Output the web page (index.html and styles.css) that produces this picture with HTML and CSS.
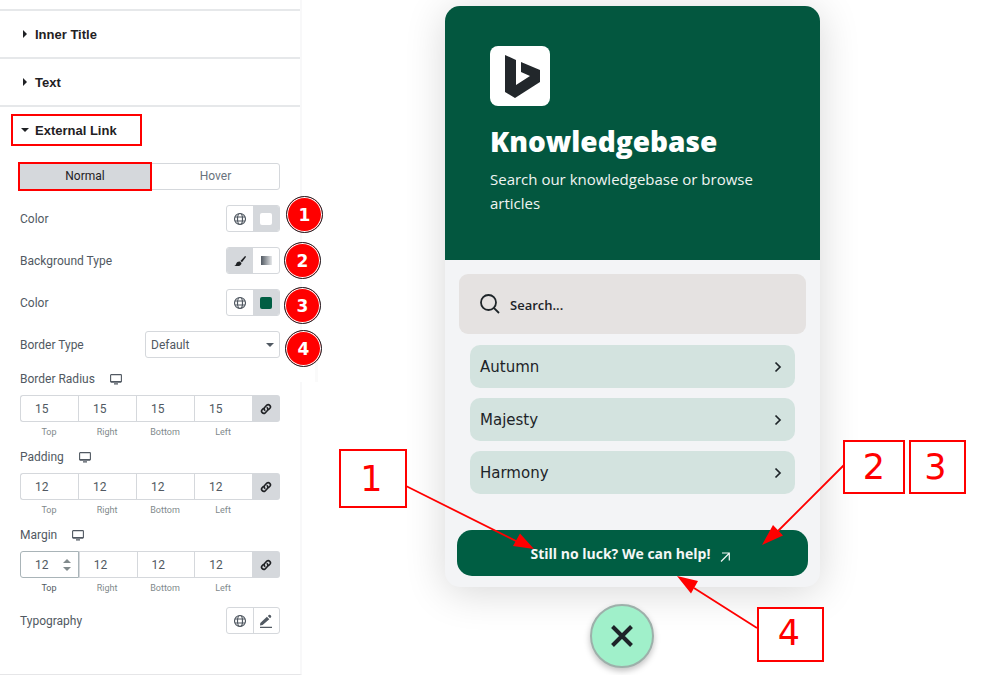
FILE: index.html
```html
<!DOCTYPE html>
<html lang="en">
<head>
<meta charset="utf-8">
<title>External Link style settings</title>
<link rel="stylesheet" href="styles.css">
</head>
<body>
<svg class="defs" aria-hidden="true">
  <symbol id="globe" viewBox="0 0 14 14"><g fill="none" stroke="currentColor" stroke-width="1.2"><circle cx="7" cy="7" r="5.5"/><ellipse cx="7" cy="7" rx="2.5" ry="5.5"/><path d="M2 5h10M2 9h10"/></g></symbol>
  <symbol id="screen" viewBox="0 0 12 11"><rect x=".6" y=".6" width="10.8" height="7.4" rx=".6" fill="none" stroke="currentColor" stroke-width="1.1"/><path d="M1 7h10v1.4H1zM4 9.2h4v1.2H4z" fill="currentColor"/></symbol>
  <symbol id="chain" viewBox="0 0 14 14"><g fill="none" stroke="currentColor" stroke-width="1.6" stroke-linecap="round"><path d="M5.8 8.3a2.2 2.2 0 0 1 0-3.1l2-2a2.2 2.2 0 0 1 3.1 3.1L9.7 7.5"/><path d="M8.2 5.7a2.2 2.2 0 0 1 0 3.1l-2 2a2.2 2.2 0 0 1-3.1-3.1l1.2-1.2"/></g></symbol>
  <symbol id="chevron" viewBox="0 0 8 12"><path d="M1.5 1.5 6 6l-4.5 4.500" fill="none" stroke="currentColor" stroke-width="1.7"/></symbol>
</svg>
<div class="page">
  <aside class="sidebar">
    <div class="sliver"></div>
    <h2 class="section"><button class="section-toggle"><svg class="caret" viewBox="0 0 8 8"><path d="M2 0l4 4-4 4z"/></svg>Inner Title</button></h2>
    <h2 class="section"><button class="section-toggle"><svg class="caret" viewBox="0 0 8 8"><path d="M2 0l4 4-4 4z"/></svg>Text</button></h2>
    <h2 class="section"><button class="section-toggle marked"><svg class="caret" viewBox="0 0 8 8"><path d="M0 2h8L4 6z"/></svg>External Link</button></h2>

    <div class="controls">
      <div class="tabs">
        <button class="tab tab-active">Normal</button>
        <button class="tab">Hover</button>
      </div>
      <div class="row">
        <span class="label">Color</span>
        <div class="pair"><button aria-label="Global color"><svg class="icon"><use href="#globe"/></svg></button><button class="on" aria-label="Pick color"><span class="swatch"></span></button></div>
      </div>
      <div class="row">
        <span class="label">Background Type</span>
        <div class="pair"><button class="on" aria-label="Classic"><svg class="icon" viewBox="0 0 14 14"><path d="M12.600 2.200c.4.300.3.800 0 1.200L9 8.300 7.400 7.100l4.200-4.700c.3-.3.700-.4 1-.2zM6.700 7.500l1.800 1.400c0 2.700-3.100 4-7.300 2.500 1.700-.2 1.800-.8 2.100-1.900.4-1.400 2-2.200 3.400-2z" fill="currentColor"/></svg></button><button aria-label="Gradient"><span class="gradient"></span></button></div>
      </div>
      <div class="row">
        <span class="label">Color</span>
        <div class="pair"><button aria-label="Global background"><svg class="icon"><use href="#globe"/></svg></button><button class="on" aria-label="Pick background"><span class="swatch swatch-green"></span></button></div>
      </div>
      <div class="row">
        <label class="label" for="border-type">Border Type</label>
        <div class="select-wrap"><select id="border-type"><option>Default</option></select><svg class="arrow" viewBox="0 0 8 4"><path d="M0 0h8L4 4z"/></svg></div>
      </div>

      <div class="groups">
        <fieldset class="group">
          <legend class="label">Border Radius <svg class="screen"><use href="#screen"/></svg></legend>
          <div class="sides">
            <input type="number" id="r1" value="15"><input type="number" id="r2" value="15"><input type="number" id="r3" value="15"><input type="number" id="r4" value="15"><button class="link" aria-label="Link values"><svg class="icon"><use href="#chain"/></svg></button>
          </div>
          <div class="captions"><label for="r1">Top</label><label for="r2">Right</label><label for="r3">Bottom</label><label for="r4">Left</label></div>
        </fieldset>
        <fieldset class="group">
          <legend class="label">Padding <svg class="screen"><use href="#screen"/></svg></legend>
          <div class="sides">
            <input type="number" id="p1" value="12"><input type="number" id="p2" value="12"><input type="number" id="p3" value="12"><input type="number" id="p4" value="12"><button class="link" aria-label="Link values"><svg class="icon"><use href="#chain"/></svg></button>
          </div>
          <div class="captions"><label for="p1">Top</label><label for="p2">Right</label><label for="p3">Bottom</label><label for="p4">Left</label></div>
        </fieldset>
        <fieldset class="group">
          <legend class="label">Margin <svg class="screen"><use href="#screen"/></svg></legend>
          <div class="sides">
            <input class="focused" type="number" id="m1" value="12"><input type="number" id="m2" value="12"><input type="number" id="m3" value="12"><input type="number" id="m4" value="12"><button class="link" aria-label="Link values"><svg class="icon"><use href="#chain"/></svg></button>
            <svg class="spinner" viewBox="0 0 12 17"><path d="M6 3l4 4H2zM2 11h8l-4 4z"/></svg>
          </div>
          <div class="captions"><label class="dark" for="m1">Top</label><label for="m2">Right</label><label for="m3">Bottom</label><label for="m4">Left</label></div>
        </fieldset>
      </div>

      <div class="row">
        <span class="label">Typography</span>
        <div class="pair"><button aria-label="Global font"><svg class="icon"><use href="#globe"/></svg></button><button class="split" aria-label="Edit typography"><svg class="icon" viewBox="0 0 14 14"><path d="M1.300 9l6.600-6.300 2.400 2.500-6.700 5.800-2.600.4zM8.800 1.900l1-.9c1.200-1 3.300 1.200 2.200 2.200l-1 1zM1 12.800h12v1.100H1z" fill="currentColor"/></svg></button></div>
      </div>
    </div>
  </aside>

  <main class="preview">
    <div class="widget">
      <section class="card">
        <header class="hero">
          <svg class="logo" viewBox="0 0 60 60"><rect width="60" height="60" rx="8" fill="#fff"/><path d="M15 9l11 5v25l14-9-9-4V16l19 8v12L25 52l-10-6z" fill="#22272b"/></svg>
          <h1>Knowledgebase</h1>
          <p>Search our knowledgebase or browse articles</p>
        </header>
        <label class="search"><svg class="lens" viewBox="0 0 20 20"><g fill="none" stroke="currentColor" stroke-width="1.800"><circle cx="8.500" cy="8.500" r="7.500"/><path d="M13.800 13.800 19 19"/></g></svg><input type="text" placeholder="Search..." aria-label="Search"></label>
        <nav class="articles">
          <a href="#autumn">Autumn<svg class="chev"><use href="#chevron"/></svg></a>
          <a href="#majesty">Majesty<svg class="chev"><use href="#chevron"/></svg></a>
          <a href="#harmony">Harmony<svg class="chev"><use href="#chevron"/></svg></a>
        </nav>
        <a class="help" href="#help">Still no luck? We can help!<svg class="out" viewBox="0 0 10 10"><path d="M1 9.500 9 1.500M2 1h7.300v7.500" fill="none" stroke="currentColor" stroke-width="1.200"/></svg></a>
      </section>
      <button class="fab" aria-label="Close"><svg viewBox="0 0 24 24"><path d="M2.500 2.500l19 19M21.500 2.500l-19 19" stroke="currentColor" stroke-width="4"/></svg></button>
    </div>
  </main>

  <div class="patch"></div>
  <div class="badge b1">1</div>
  <div class="badge b2">2</div>
  <div class="badge b3">3</div>
  <div class="badge b4">4</div>

  <svg class="pointers" viewBox="0 0 1005 675" aria-hidden="true">
    <g stroke="#f00" stroke-width="1.800"><path d="M406 486 518 542M844 465 776 533M757 628 694 588"/></g>
    <g fill="#f00"><path d="M534 549l-21-3 7-12.500zM762 545l11-20 10 10.500zM677 576l21 5-7 12.500z"/></g>
  </svg>
  <div class="callout c1">1</div>
  <div class="callout c2">2</div>
  <div class="callout c3">3</div>
  <div class="callout c4">4</div>
</div>
</body>
</html>
```
FILE: styles.css
```css
* { box-sizing: border-box; }
body { margin: 0; background: #fff; font-family: Roboto, sans-serif; font-size: 12px; color: #515962; }
button, input, select { font: inherit; color: inherit; margin: 0; padding: 0; border: 0; background: none; }
h1, h2, p { margin: 0; }
.defs { position: absolute; width: 0; height: 0; }
.page { position: relative; display: flex; min-height: 675px; overflow: hidden; }

.sidebar { flex: 0 0 302px; min-width: 0; border-right: 2px solid #f8f8f9; border-bottom: 1px solid #e6e6e8; }
.sliver { height: 9px; }
.section { display: flex; align-items: center; height: 48px; border-top: 2px solid #e6e8ea; padding-left: 11px; }
.section-toggle { display: flex; align-items: center; gap: 6px; width: 131px; height: 32px; padding-left: 10px; font-family: "Liberation Sans", Arial, sans-serif; font-size: 13px; font-weight: 700; color: #1f2124; }
.marked { border: 2px solid #f00; padding-left: 8px; }
.caret { width: 8px; height: 8px; fill: #1f2124; }
.controls { display: flex; flex-direction: column; gap: 15px; padding: 10px 20px 40px; }
.tabs { display: flex; height: 27px; border: 1px solid #d5d8dc; border-radius: 3px; }
.tab { flex: 1; padding-bottom: 2px; color: #69727d; }
.tab-active { background: #d5d8dc; color: #1f2124; margin: -2px 0 -2px -3px; border: 2px solid #f00; flex: 0 0 134px; }
.row { display: flex; align-items: center; justify-content: space-between; height: 27px; }
.label { color: #515962; }
.pair { display: flex; width: 54px; height: 27px; border: 1px solid #d5d8dc; border-radius: 3px; overflow: hidden; }
.pair button { flex: 1; display: flex; align-items: center; justify-content: center; }
.pair .on { background: #d5d8dc; color: #1f2124; }
.pair .split { border-left: 1px solid #d5d8dc; }
.icon { width: 14px; height: 14px; }
.swatch { width: 12px; height: 12px; border-radius: 2px; background: #fff; }
.swatch-green { background: #005e43; }
.gradient { width: 11px; height: 9px; background: linear-gradient(90deg, #515962, #e6e8ea); }
.select-wrap { position: relative; width: 135px; }
.select-wrap select { width: 100%; height: 27px; border: 1px solid #d5d8dc; border-radius: 3px; padding-left: 5px; appearance: none; }
.arrow { position: absolute; right: 6px; top: 12px; width: 8px; height: 4px; fill: #515962; }

.groups { display: flex; flex-direction: column; gap: 11px; margin: -2px 0; }
.group { margin: 0; padding: 0; border: 0; min-width: 0; }
.group legend { display: flex; align-items: center; gap: 15px; height: 16px; padding: 0; margin-bottom: 8px; }
.screen { width: 12px; height: 11px; }
.sides { position: relative; display: flex; height: 27px; }
.sides input { flex: 1 1 0; width: 0; min-width: 0; border: 1px solid #d5d8dc; border-right-width: 0; padding-left: 14px; font-size: 12px; appearance: textfield; }
.sides input:first-child { border-radius: 3px 0 0 3px; }
.sides .focused { border: 1px solid #a9b4b8; }
.sides input::-webkit-inner-spin-button { appearance: none; margin: 0; }
.link { display: flex; align-items: center; justify-content: center; width: 28px; background: #d5d8dc; color: #1f2124; border-radius: 0 3px 3px 0; }
.spinner { position: absolute; left: 41px; top: 5px; width: 12px; height: 17px; fill: #818a8c; }
.captions { display: grid; grid-template-columns: repeat(4, 1fr); margin: 4px 28px 0 0; line-height: 12px; font-size: 9px; text-align: center; color: #818a8c; }
.captions .dark { color: #515962; }

.preview { flex: 1; display: flex; justify-content: center; padding: 6px 42px 7px 0; font-family: "Open Sans", sans-serif; }
.widget { width: 375px; }
.card { background: #f3f4f6; border-radius: 15px; overflow: hidden; box-shadow: 0 5px 40px rgba(0, 0, 0, .16); padding-bottom: 11px; }
.hero { height: 254px; padding: 40px 45px; background: #03573f; color: #fff; }
.logo { display: block; width: 60px; height: 60px; }
.hero h1 { margin-top: 15px; font-size: 28px; line-height: 40px; font-weight: 800; }
.hero p { margin-top: 6px; font-size: 15px; line-height: 24px; font-weight: 500; color: #f0f4f2; }
.search { display: flex; align-items: center; gap: 10px; height: 60px; margin: 14px 14px 11px; padding-left: 21px; border-radius: 9px; background: #e5e2e1; color: #1d2428; }
.lens { width: 20px; height: 20px; }
.search input { flex: 1; min-width: 0; padding-top: 2px; font-size: 13px; font-weight: 600; outline: 0; }
.search input::placeholder { color: #1d2428; opacity: 1; }
.articles { display: flex; flex-direction: column; gap: 10px; margin: 0 25px; }
.articles a { display: flex; align-items: center; justify-content: space-between; height: 43px; padding: 0 13px 0 10px; border-radius: 10px; background: #d3e3df; color: #1d2428; text-decoration: none; font-family: "DejaVu Sans", sans-serif; font-size: 15px; }
.chev { width: 8px; height: 12px; }
.help { display: flex; align-items: center; justify-content: center; gap: 10px; height: 46px; margin: 36px 12px 0; padding-right: 4px; border-radius: 15px; background: #005e43; color: #f4f7f6; text-decoration: none; font-size: 14px; font-weight: 700; }
.out { width: 10px; height: 10px; margin-top: 7px; }
.fab { display: flex; align-items: center; justify-content: center; width: 64px; height: 64px; margin: 17px 0 0 145px; border: 2px solid #9db0aa; border-radius: 50%; background: #a0f0ca; color: #1d2428; box-shadow: 0 3px 6px rgba(0, 0, 0, .25); }
.fab svg { width: 24px; height: 24px; }

.patch { position: absolute; left: 300px; top: 335px; width: 18px; height: 47px; background: #fff; border-right: 3px solid #fafafa; }
.badge { position: absolute; display: flex; align-items: center; justify-content: center; width: 37px; height: 37px; border: 1px solid #20262b; border-radius: 50%; background: #f00; box-shadow: inset 0 0 0 1px #fff; color: #fff; font: 700 17px "DejaVu Sans", sans-serif; }
.b1 { left: 286px; top: 196px; }
.b2 { left: 284px; top: 242px; }
.b3 { left: 284px; top: 287px; }
.b4 { left: 285px; top: 330px; }
.pointers { position: absolute; left: 0; top: 0; width: 1005px; height: 675px; pointer-events: none; }
.callout { position: absolute; display: flex; align-items: center; justify-content: center; border: 2px solid #f00; background: #fff; color: #f00; font: 35px "DejaVu Sans", sans-serif; }
.c1 { left: 339px; top: 449px; width: 68px; height: 59px; padding-right: 3px; }
.c2 { left: 843px; top: 440px; width: 62px; height: 54px; }
.c3 { left: 909px; top: 440px; width: 57px; height: 54px; padding-right: 4px; }
.c4 { left: 757px; top: 607px; width: 67px; height: 55px; padding: 0 3px 4px 0; }
```
